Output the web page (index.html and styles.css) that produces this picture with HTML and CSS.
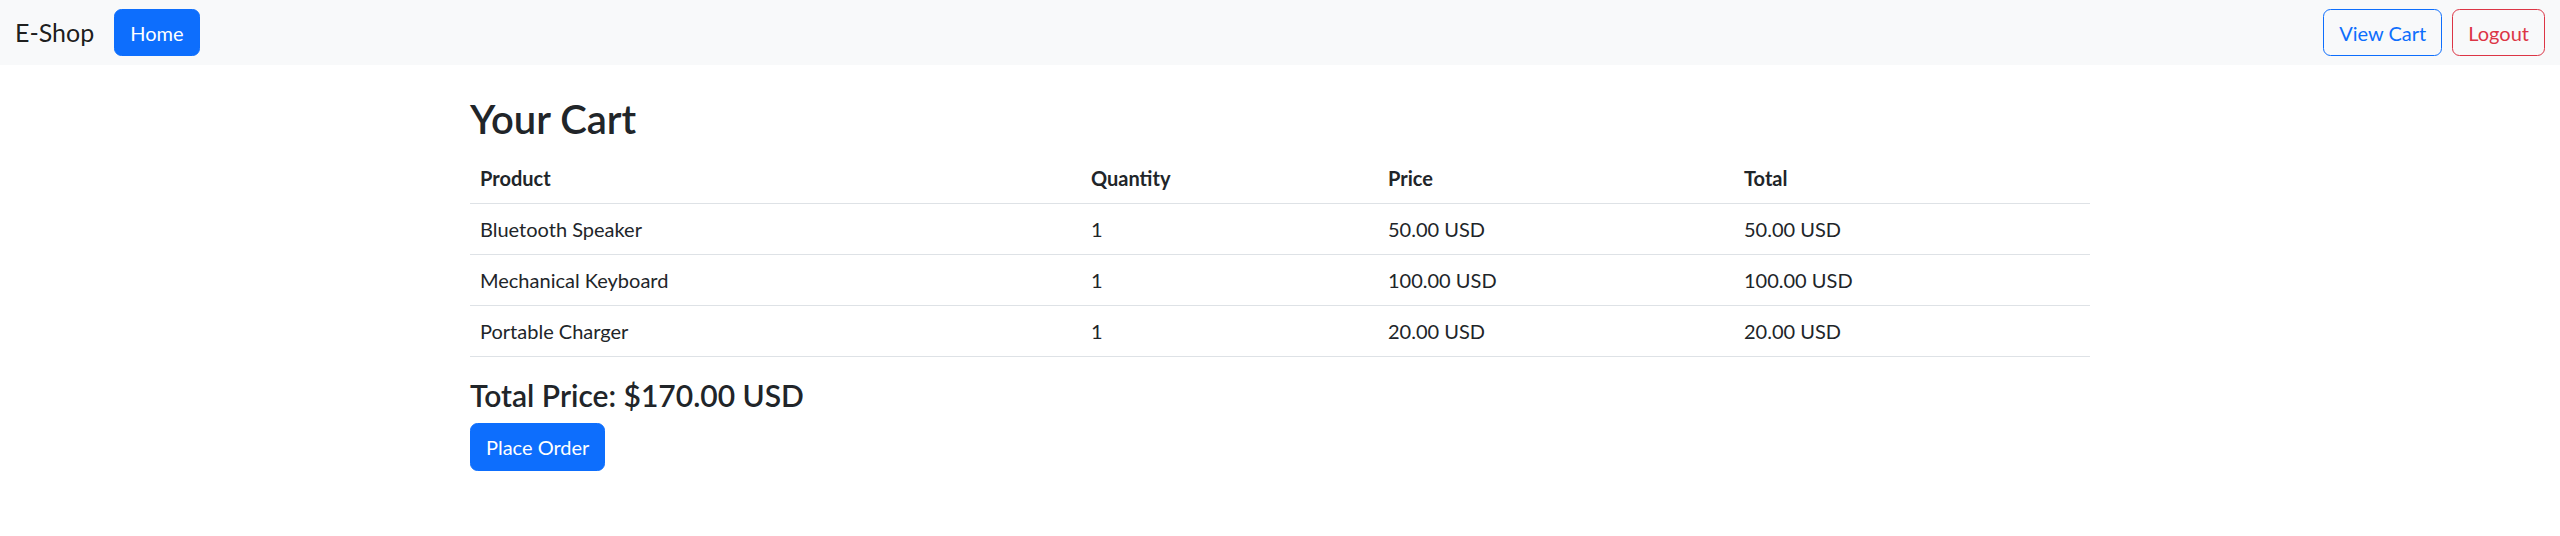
FILE: index.html
```html
<!DOCTYPE html>
<html lang="en">
<head>
<meta charset="utf-8">
<title>E-Shop - Your Cart</title>
<link rel="stylesheet" href="styles.css">
</head>
<body>
<nav class="navbar">
  <a class="brand" href="#">E-Shop</a>
  <a class="btn btn-primary" href="#">Home</a>
  <div class="nav-right">
    <a class="btn btn-outline-primary" href="#">View Cart</a>
    <a class="btn btn-outline-danger" href="#">Logout</a>
  </div>
</nav>
<main class="container">
  <h2 class="title">Your Cart</h2>
  <table class="table">
    <colgroup>
      <col class="c-product"><col class="c-qty"><col class="c-price"><col class="c-total">
    </colgroup>
    <thead>
      <tr><th>Product</th><th>Quantity</th><th>Price</th><th>Total</th></tr>
    </thead>
    <tbody>
      <tr><td>Bluetooth Speaker</td><td>1</td><td>50.00 USD</td><td>50.00 USD</td></tr>
      <tr><td>Mechanical Keyboard</td><td>1</td><td>100.00 USD</td><td>100.00 USD</td></tr>
      <tr><td>Portable Charger</td><td>1</td><td>20.00 USD</td><td>20.00 USD</td></tr>
    </tbody>
  </table>
  <h4 class="total">Total Price: $170.00 USD</h4>
  <a class="btn btn-primary" href="#">Place Order</a>
</main>
</body>
</html>
```

FILE: styles.css
```css
* { box-sizing: border-box; }
html, body { margin: 0; padding: 0; }
body {
  font-family: "Lato", "Open Sans", "Liberation Sans", sans-serif;
  font-size: 20px;
  line-height: 1.5;
  color: #212529;
  background: #fff;
}
a { text-decoration: none; }

.navbar {
  display: flex;
  align-items: center;
  height: 65px;
  padding: 7.5px 15px;
  background: #f8f9fa;
}
.brand {
  font-size: 25px;
  line-height: 37.5px;
  padding: 6.25px 0;
  margin-right: 20px;
  color: rgba(0, 0, 0, 0.9);
}
.nav-right {
  margin-left: auto;
  display: flex;
  gap: 10px;
}

.btn {
  display: inline-block;
  font-size: 20px;
  line-height: 30px;
  padding: 7.75px 15px;
  border: 1px solid transparent;
  border-radius: 7.5px;
  font-weight: 400;
}
.btn-primary { background: #0d6efd; border-color: #0d6efd; color: #fff; }
.btn-outline-primary { color: #0d6efd; border-color: #0d6efd; }
.btn-outline-danger { color: #dc3545; border-color: #dc3545; }

.container {
  max-width: 1650px;
  margin: 30px auto 0;
  padding: 0 15px;
}
.title {
  font-size: 40px;
  font-weight: 600;
  line-height: 1.2;
  margin: 0 0 10px;
}
.table {
  width: 100%;
  border-collapse: collapse;
  margin-bottom: 20px;
}
.c-product { width: 611px; }
.c-qty { width: 297px; }
.c-price { width: 356px; }
.c-total { width: 356px; }
.table th, .table td {
  text-align: left;
  padding: 10px;
  border-bottom: 1px solid #dee2e6;
  vertical-align: top;
}
.table th { font-weight: 700; }
.total {
  font-size: 30px;
  font-weight: 600;
  line-height: 1.2;
  margin: 0 0 10px;
}
```
